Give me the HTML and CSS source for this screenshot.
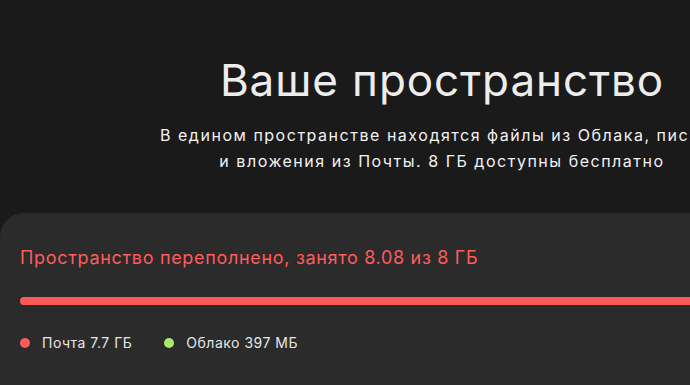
FILE: index.html
```html
<!DOCTYPE html>
<html lang="ru">
<head>
<meta charset="utf-8">
<link rel="stylesheet" href="styles.css">
</head>
<body>
<main class="page">
  <header class="intro">
    <h1 class="title">Ваше пространство</h1>
    <p class="subtitle">В едином пространстве находятся файлы из Облака, письма<br>и вложения из Почты. 8 ГБ доступны бесплатно</p>
  </header>
  <section class="card">
    <div class="status">Пространство переполнено, занято 8.08 из 8 ГБ</div>
    <div class="bar"><div class="bar-fill"></div></div>
    <ul class="legend">
      <li class="legend-item"><span class="dot dot-mail"></span>Почта 7.7 ГБ</li>
      <li class="legend-item"><span class="dot dot-cloud"></span>Облако 397 МБ</li>
    </ul>
  </section>
</main>
</body>
</html>
```
FILE: styles.css
```css
html, body {
  margin: 0;
  padding: 0;
  background: #1a1a1a;
  overflow: hidden;
}
body {
  font-family: "Inter", "Liberation Sans", sans-serif;
  color: #ebebeb;
}
.page {
  width: 884px;
  display: flex;
  flex-direction: column;
}
.intro {
  text-align: center;
  padding-top: 54px;
}
.title {
  margin: 0;
  font-size: 44px;
  font-weight: 400;
  line-height: 52px;
  letter-spacing: 0.9px;
  color: #ededed;
}
.subtitle {
  margin: 16px 0 0;
  font-size: 16px;
  line-height: 26px;
  letter-spacing: 1.52px;
  color: #f2f2f2;
}
.card {
  margin-top: 39px;
  background: #2b2b2b;
  border-radius: 24px 24px 0 0;
  padding: 33px 20px 40px;
  height: 200px;
}
.status {
  font-size: 18px;
  line-height: 24px;
  letter-spacing: 0.68px;
  color: #ff5b5b;
}
.bar {
  margin-top: 27px;
  height: 8px;
  border-radius: 4px;
  background: #ff5a5a;
}
.bar-fill {
  height: 100%;
}
.legend {
  list-style: none;
  margin: 28px 0 0;
  padding: 0;
  display: flex;
  gap: 32px;
}
.legend-item {
  display: flex;
  align-items: center;
  font-size: 14px;
  line-height: 20px;
  letter-spacing: 0.5px;
  color: #e6e6e6;
}
.dot {
  width: 10px;
  height: 10px;
  border-radius: 50%;
  margin-right: 12px;
}
.dot-mail { background: #ff5a5a; }
.dot-cloud { background: #a8e86c; }
```
